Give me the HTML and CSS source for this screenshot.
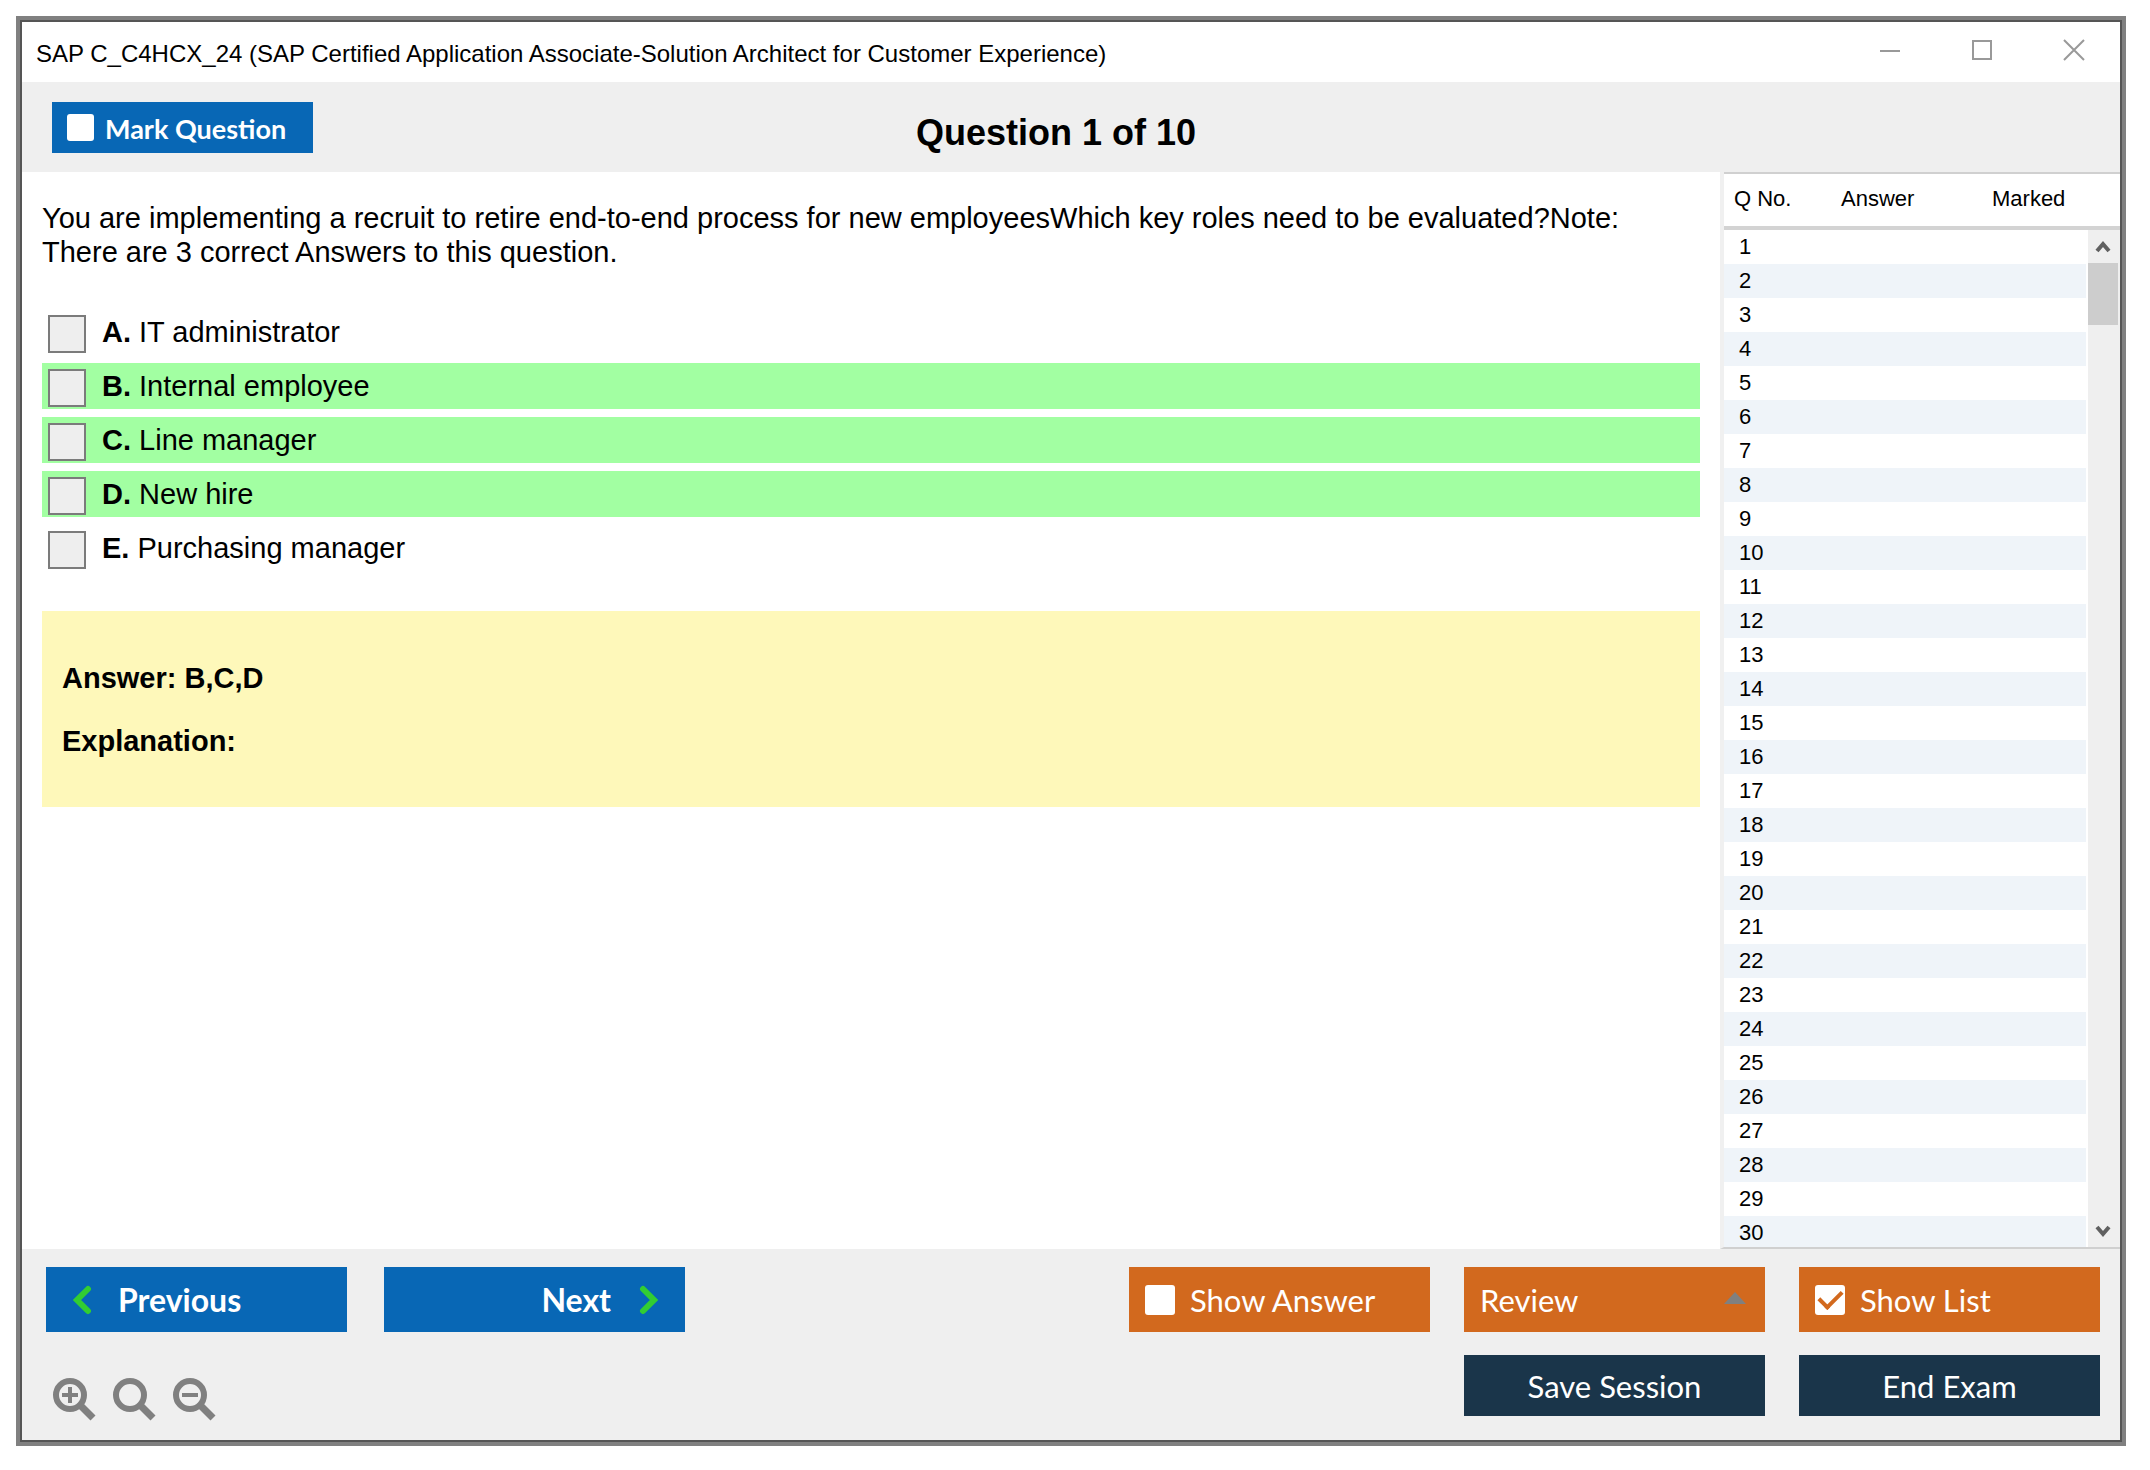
FILE: index.html
```html
<!DOCTYPE html>
<html lang="en">

<head>
  <meta charset="utf-8">
  <title>Exam Simulator</title>
  <link rel="stylesheet" href="styles.css">
</head>

<body>
  <div class="window">
    <div class="titlebar">
      <span class="title">SAP C_C4HCX_24 (SAP Certified Application Associate-Solution Architect for Customer Experience)</span>
      <div class="window-buttons">
        <button type="button" aria-label="Minimize">
          <svg width="22" height="22" viewBox="0 0 22 22"><path d="M1 12h20"></path></svg>
        </button>
        <button type="button" aria-label="Maximize">
          <svg width="22" height="22" viewBox="0 0 22 22"><path d="M2 2h18v18H2z"></path></svg>
        </button>
        <button type="button" aria-label="Close">
          <svg width="22" height="22" viewBox="0 0 22 22"><path d="M1 1l20 20M21 1L1 21"></path></svg>
        </button>
      </div>
    </div>

    <div class="header">
      <label class="btn mark"><input type="checkbox" class="tick"><span>Mark Question</span></label>
      <h1>Question 1 of 10</h1>
    </div>

    <div class="main">
      <div class="question">
        <p class="question-text">You are implementing a recruit to retire end-to-end process for new employeesWhich key roles need to be evaluated?Note: There are 3 correct Answers to this question.</p>

        <div class="options">
          <label class="option"><input type="checkbox"><span><b>A.</b> IT administrator</span></label>
          <label class="option correct"><input type="checkbox"><span><b>B.</b> Internal employee</span></label>
          <label class="option correct"><input type="checkbox"><span><b>C.</b> Line manager</span></label>
          <label class="option correct"><input type="checkbox"><span><b>D.</b> New hire</span></label>
          <label class="option"><input type="checkbox"><span><b>E.</b> Purchasing manager</span></label>
        </div>

        <div class="answer">
          <p>Answer: B,C,D</p>
          <p>Explanation:</p>
        </div>
      </div>

      <div class="list">
        <table>
          <thead>
            <tr><th class="col-no">Q No.</th><th class="col-answer">Answer</th><th>Marked</th></tr>
          </thead>
          <tbody>
            <tr><td>1</td><td></td><td></td></tr>
            <tr><td>2</td><td></td><td></td></tr>
            <tr><td>3</td><td></td><td></td></tr>
            <tr><td>4</td><td></td><td></td></tr>
            <tr><td>5</td><td></td><td></td></tr>
            <tr><td>6</td><td></td><td></td></tr>
            <tr><td>7</td><td></td><td></td></tr>
            <tr><td>8</td><td></td><td></td></tr>
            <tr><td>9</td><td></td><td></td></tr>
            <tr><td>10</td><td></td><td></td></tr>
            <tr><td>11</td><td></td><td></td></tr>
            <tr><td>12</td><td></td><td></td></tr>
            <tr><td>13</td><td></td><td></td></tr>
            <tr><td>14</td><td></td><td></td></tr>
            <tr><td>15</td><td></td><td></td></tr>
            <tr><td>16</td><td></td><td></td></tr>
            <tr><td>17</td><td></td><td></td></tr>
            <tr><td>18</td><td></td><td></td></tr>
            <tr><td>19</td><td></td><td></td></tr>
            <tr><td>20</td><td></td><td></td></tr>
            <tr><td>21</td><td></td><td></td></tr>
            <tr><td>22</td><td></td><td></td></tr>
            <tr><td>23</td><td></td><td></td></tr>
            <tr><td>24</td><td></td><td></td></tr>
            <tr><td>25</td><td></td><td></td></tr>
            <tr><td>26</td><td></td><td></td></tr>
            <tr><td>27</td><td></td><td></td></tr>
            <tr><td>28</td><td></td><td></td></tr>
            <tr><td>29</td><td></td><td></td></tr>
            <tr><td>30</td><td></td><td></td></tr>
          </tbody>
        </table>
        <!-- Scrollbar sits over the right edge of the table, below its header -->
        <div class="scrollbar">
          <button type="button" aria-label="Scroll up">
            <svg width="16" height="14" viewBox="0 0 16 14"><path d="M2 11l6-7 6 7"></path></svg>
          </button>
          <div class="thumb"></div>
          <button type="button" class="down" aria-label="Scroll down">
            <svg width="16" height="14" viewBox="0 0 16 14"><path d="M2 3l6 7 6-7"></path></svg>
          </button>
        </div>
      </div>
    </div>

    <div class="footer">
      <div class="footer-left">
        <div class="nav">
          <button type="button" class="btn blue">
            <svg width="20" height="30" viewBox="0 0 20 30"><path d="M16 4L5 15l11 11"></path></svg>
            <span>Previous</span>
          </button>
          <button type="button" class="btn blue next">
            <span>Next</span>
            <svg width="20" height="30" viewBox="0 0 20 30"><path d="M4 4l11 11L4 26"></path></svg>
          </button>
        </div>
        <div class="zoom">
          <button type="button" aria-label="Zoom in">
            <svg width="44" height="44" viewBox="0 0 44 44">
              <circle cx="18" cy="18" r="14"></circle>
              <path class="handle" d="M28 28l13 13"></path>
              <path class="sign" d="M10 18h16M18 10v16"></path>
            </svg>
          </button>
          <button type="button" aria-label="Reset zoom">
            <svg width="44" height="44" viewBox="0 0 44 44">
              <circle cx="18" cy="18" r="14"></circle>
              <path class="handle" d="M28 28l13 13"></path>
            </svg>
          </button>
          <button type="button" aria-label="Zoom out">
            <svg width="44" height="44" viewBox="0 0 44 44">
              <circle cx="18" cy="18" r="14"></circle>
              <path class="handle" d="M28 28l13 13"></path>
              <path class="sign" d="M10 18h16"></path>
            </svg>
          </button>
        </div>
      </div>

      <div class="footer-right">
        <label class="btn orange"><input type="checkbox" class="tick">Show Answer</label>
        <div class="review">
          <select class="btn orange" aria-label="Review">
            <option>Review</option>
          </select>
          <svg width="24" height="14" viewBox="0 0 24 14"><path d="M1 13L12 1l11 12z"></path></svg>
        </div>
        <label class="btn orange"><input type="checkbox" class="tick" checked>Show List</label>
        <button type="button" class="btn dark save">Save Session</button>
        <button type="button" class="btn dark">End Exam</button>
      </div>
    </div>
  </div>
</body>

</html>
```
FILE: styles.css
```css
* {
  box-sizing: border-box;
}

body {
  margin: 0;
  padding: 16px 24px 24px 16px;
  height: 100vh;
  background-color: #fff;
  color: #000;
  font-family: "Liberation Sans", Arial, sans-serif;
  font-size: 29px;
  line-height: 34px;
}

p,
h1 {
  margin: 0;
}

button {
  border: 0;
  padding: 0;
  background: none;
}

svg {
  display: block;
  fill: none;
}

/* Window frame */
.window {
  display: flex;
  flex-direction: column;
  height: 100%;
  border: 4px solid #808080;
  box-shadow: inset 0 0 0 2px #555;
  padding: 2px;
}

.titlebar {
  display: flex;
  justify-content: space-between;
  align-items: center;
  height: 60px;
  padding: 4px 35px 0 14px;
}

.title {
  font-size: 24px;
}

.window-buttons {
  display: flex;
  gap: 70px;
  padding-bottom: 8px;
}

.window-buttons svg {
  stroke: #999;
  stroke-width: 2;
}

/* Mark button and question number */
.header {
  display: grid;
  grid-template-columns: 1fr auto 1fr;
  align-items: center;
  height: 90px;
  padding: 0 60px 0 30px;
  background-color: #efefef;
}

h1 {
  font-size: 36px;
  line-height: 40px;
  padding-top: 12px;
}

.btn {
  display: flex;
  align-items: center;
  gap: 15px;
  width: 301px;
  height: 65px;
  border: 0;
  border-radius: 0;
  padding: 0 16px;
  font-family: Lato, Calibri, sans-serif;
  font-size: 31px;
  color: #fff;
}

.mark {
  justify-self: start;
  width: 261px;
  height: 51px;
  padding: 0 15px;
  gap: 11px;
  background-color: #0867b5;
  font-size: 27px;
  font-weight: bold;
}

.mark span {
  padding-top: 3px;
}

.tick {
  appearance: none;
  display: grid;
  place-items: center;
  width: 30px;
  height: 30px;
  margin: 0;
  border-radius: 3px;
  background-color: #fff;
}

.mark .tick {
  width: 27px;
  height: 27px;
}

.tick:checked::after {
  content: "";
  width: 19px;
  height: 10px;
  border: solid #d2691e;
  border-width: 0 0 4px 4px;
  transform: translateY(-3px) rotate(-45deg);
}

/* Question area */
.main {
  display: flex;
  flex: 1;
  min-height: 0;
}

.question {
  flex: 1;
  padding: 29px 20px 0;
}

.question-text {
  padding-right: 20px;
}

.options {
  display: flex;
  flex-direction: column;
  gap: 8px;
  margin: 40px 0;
}

.option {
  display: flex;
  gap: 16px;
  height: 46px;
  padding: 6px 6px 0;
}

.option input {
  appearance: none;
  width: 38px;
  height: 38px;
  margin: 0;
  border: 2px solid #7b7b7b;
  background-color: #eee;
}

.correct {
  background-color: #a2ffa2;
}

.answer {
  display: flex;
  flex-direction: column;
  gap: 29px;
  padding: 50px 20px 49px;
  background-color: #fef8ba;
  font-weight: bold;
}

/* Question list */
.list {
  position: relative;
  width: 400px;
  overflow: hidden;
  border-left: 4px solid #f0f0f0;
  border-bottom: 2px solid #d0d0d0;
  font-size: 22px;
}

table {
  width: 100%;
  border-collapse: separate;
  border-spacing: 0;
  table-layout: fixed;
}

th {
  height: 58px;
  padding: 0 0 2px 10px;
  border-top: 2px solid #d0d0d0;
  border-bottom: 4px solid #d3d3d3;
  font-weight: normal;
  text-align: left;
}

.col-no {
  width: 107px;
}

.col-answer {
  width: 151px;
}

td {
  height: 34px;
  padding: 0 0 0 15px;
}

tbody tr:nth-child(even) {
  background-color: #eff4f9;
}

.scrollbar {
  position: absolute;
  top: 58px;
  right: 0;
  bottom: 0;
  display: flex;
  flex-direction: column;
  width: 34px;
  padding-right: 2px;
  border-left: 2px solid #fff;
  background-color: #efefef;
}

.scrollbar svg {
  margin: 0 auto;
  stroke: #606060;
  stroke-width: 4;
}

.scrollbar button {
  height: 33px;
}

.thumb {
  height: 62px;
  background-color: #cdcdcd;
}

.scrollbar .down {
  margin-top: auto;
}

/* Bottom bar */
.footer {
  display: flex;
  justify-content: space-between;
  padding: 18px 20px 19px 24px;
  background-color: #efefef;
}

.nav {
  display: flex;
  gap: 37px;
}

.blue {
  gap: 26px;
  padding: 0 26px;
  background-color: #0867b5;
  font-size: 32px;
  font-weight: bold;
}

.blue svg {
  stroke: #32cd32;
  stroke-width: 6;
  stroke-linecap: round;
}

.next {
  justify-content: flex-end;
  gap: 28px;
}

.zoom {
  display: flex;
  gap: 16px;
  padding: 45px 0 0 6px;
}

.zoom svg {
  stroke: #808080;
  stroke-width: 6;
}

.zoom .handle {
  stroke-width: 7;
}

.zoom .sign {
  stroke-width: 4;
}

.footer-right {
  display: grid;
  grid-template-columns: repeat(3, auto);
  align-content: start;
  gap: 23px 34px;
}

.orange {
  background-color: #d2691e;
}

.review {
  position: relative;
  display: flex;
}

.review select {
  appearance: none;
}

.review svg {
  position: absolute;
  top: 24px;
  right: 18px;
  fill: #808080;
  pointer-events: none;
}

.dark {
  justify-content: center;
  height: 61px;
  background-color: #1a354a;
}

.save {
  grid-column: 2;
}
```
